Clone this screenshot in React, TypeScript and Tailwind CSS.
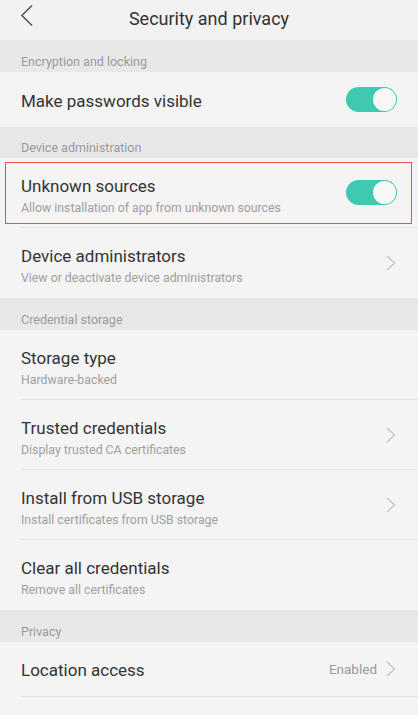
import React from "react";

const Chevron = () => (
  <svg width="12" height="18" viewBox="0 0 12 18" className="shrink-0">
    <path d="M2 2 L9.5 9 L2 16" fill="none" stroke="#c4c4c4" strokeWidth="1.4" />
  </svg>
);

const Toggle = () => (
  <div className="w-[51px] h-[25px] rounded-full bg-[#40c9b1] flex items-center justify-end pr-[1px] shrink-0">
    <div className="w-[23px] h-[23px] rounded-full bg-[#f7f7f7]" />
  </div>
);

const Section = ({ label, h = "h-[32px]" }: { label: string; h?: string }) => (
  <div className={`${h} bg-[#e8e8e8] flex items-end pb-[1px] pl-[21px] text-[12.5px] leading-[18px] text-[#9a9a9a]`}>
    {label}
  </div>
);

const Row = ({
  title,
  sub,
  right,
  divider = true,
  boxed = false,
}: {
  title: string;
  sub?: string;
  right?: React.ReactNode;
  divider?: boolean;
  boxed?: boolean;
}) => (
  <div className={`${sub ? "h-[70px]" : "h-[55px]"} bg-[#f4f4f4] pl-[21px] relative`}>
    <div className={`h-full flex items-center pr-[21px] ${divider ? "border-b border-[#e4e4e4]" : ""}`}>
      <div className={`flex-1 flex flex-col ${sub ? "pt-[6px]" : "pt-[2px]"}`}>
        <div className="text-[17px] leading-[22px] text-[#333]">{title}</div>
        {sub && <div className="text-[12.3px] leading-[18px] mt-[2px] text-[#a0a0a0]">{sub}</div>}
      </div>
      {right}
    </div>
    {boxed && (
      <div className="absolute left-[5px] right-[6px] top-[4px] bottom-[4px] border border-[#e8504f] pointer-events-none" />
    )}
  </div>
);

export default function App() {
  return (
    <div
      className="w-[418px] h-[715px] bg-[#f4f4f4] overflow-hidden"
      style={{ fontFamily: "Roboto, 'Liberation Sans', sans-serif" }}
    >
      <div className="h-[40px] bg-[#f2f2f2] relative flex items-center justify-center">
        <svg width="14" height="24" viewBox="0 0 14 24" className="absolute left-[20px] top-[4px]">
          <path d="M12 1.5 L1.8 11.5 L12 21.5" fill="none" stroke="#444" strokeWidth="1.3" />
        </svg>
        <div className="text-[18px] text-[#333] -mt-[4px]">Security and privacy</div>
      </div>
      <Section label="Encryption and locking" />
      <Row title="Make passwords visible" right={<Toggle />} divider={false} />
      <Section label="Device administration" h="h-[31px]" />
      <Row
        title="Unknown sources"
        sub="Allow installation of app from unknown sources"
        right={<Toggle />}
        boxed
      />
      <Row
        title="Device administrators"
        sub="View or deactivate device administrators"
        right={<Chevron />}
        divider={false}
      />
      <Section label="Credential storage" />
      <Row title="Storage type" sub="Hardware-backed" />
      <Row title="Trusted credentials" sub="Display trusted CA certificates" right={<Chevron />} />
      <Row title="Install from USB storage" sub="Install certificates from USB storage" right={<Chevron />} />
      <Row title="Clear all credentials" sub="Remove all certificates" divider={false} />
      <Section label="Privacy" />
      <Row
        title="Location access"
        right={
          <div className="flex items-center gap-[8px]">
            <span className="text-[13.5px] text-[#9a9a9a]">Enabled</span>
            <Chevron />
          </div>
        }
      />
    </div>
  );
}
